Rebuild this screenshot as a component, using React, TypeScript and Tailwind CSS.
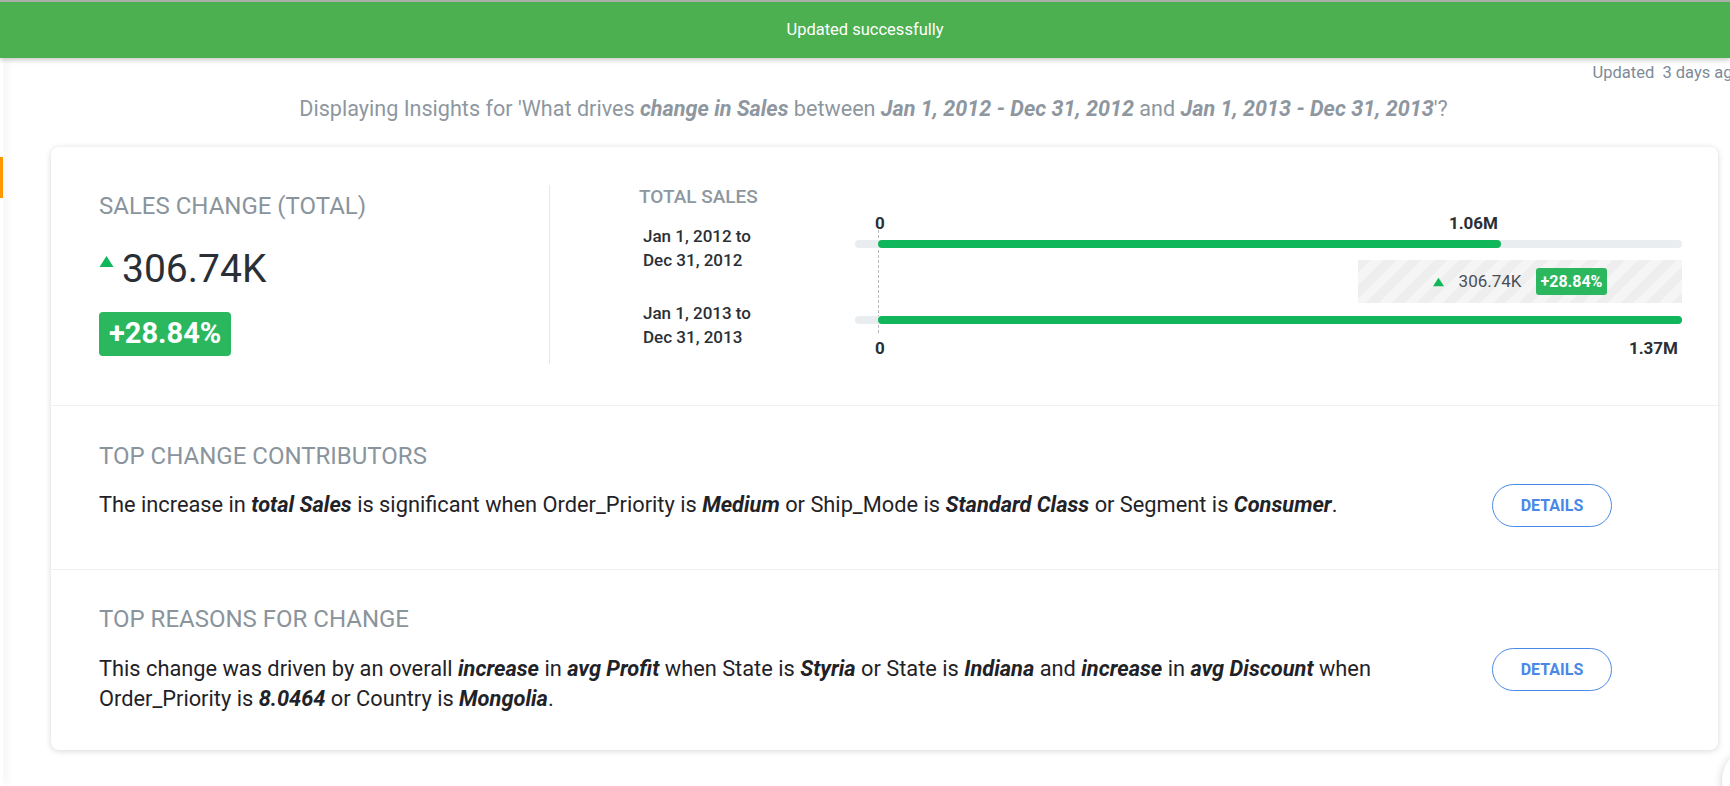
import React from 'react';

function BI({ children }: { children: React.ReactNode }) {
  return <span className="font-bold italic">{children}</span>;
}

function UpTriangle({ className }: { className?: string }) {
  return (
    <svg viewBox="0 0 14 11" className={className}>
      <polygon points="7,0 14,11 0,11" fill="currentColor" />
    </svg>
  );
}

function DetailsButton() {
  return (
    <div className="w-[236px] flex justify-center shrink-0">
      <button className="w-[120px] h-[43px] rounded-full border border-[#4a88e8] text-[#4a88e8] text-[16px] font-bold bg-white">
        DETAILS
      </button>
    </div>
  );
}

function SalesChart() {
  return (
    <div className="flex-1 pl-[89px] pr-[36px]">
      <div className="mt-[2px] text-[19px] leading-5 font-medium text-[#8e979f]">TOTAL SALES</div>
      <div className="mt-[7px] flex">
        {/* period labels */}
        <div className="w-[216px] pl-1 text-[17px] leading-6 font-medium text-[#2a2f36]">
          <div className="mt-[10px]">
            <div>Jan 1, 2012 to</div>
            <div>Dec 31, 2012</div>
          </div>
          <div className="mt-[29px]">
            <div>Jan 1, 2013 to</div>
            <div>Dec 31, 2013</div>
          </div>
        </div>

        {/* bars */}
        <div className="flex-1 relative">
          <div className="absolute left-[23px] top-[16px] h-[103px] border-l border-dashed border-[#b4b8bc]" />
          <div className="ml-[23px] w-[623px] h-[18px] flex justify-between text-[17px] leading-[18px] font-bold text-[#2a2f36]">
            <span className="-ml-[3px]">0</span>
            <span className="mr-[3px]">1.06M</span>
          </div>
          <div className="relative mt-2 h-2 rounded-full bg-[#e9edf0]">
            <div className="ml-[23px] w-[623px] h-2 rounded-full bg-[#10b65a]" />
          </div>
          <div className="mt-3 h-[43px] flex justify-end">
            <div className="w-[324px] h-full flex items-center justify-center bg-[repeating-linear-gradient(135deg,#eeeeee_0px,#eeeeee_9px,#f5f5f5_9px,#f5f5f5_18px)]">
              <UpTriangle className="w-[11px] h-[10px] text-[#10b65a]" />
              <span className="ml-[15px] text-[17px] text-[#4a4f55]">306.74K</span>
              <span className="ml-[14px] h-[27px] px-[5px] flex items-center rounded-[3px] bg-[#2bb75e] text-white text-[16px] font-bold">
                +28.84%
              </span>
            </div>
          </div>
          <div className="relative mt-[13px] h-2 rounded-full bg-[#e9edf0]">
            <div className="ml-[23px] h-2 rounded-full bg-[#10b65a]" />
          </div>
          <div className="mt-[15px] ml-[23px] h-[18px] flex justify-between text-[17px] leading-[18px] font-bold text-[#2a2f36]">
            <span className="-ml-[3px]">0</span>
            <span className="mr-1">1.37M</span>
          </div>
        </div>
      </div>
    </div>
  );
}

export default function App() {
  return (
    <div className="relative w-[1730px] h-[786px] overflow-hidden bg-white font-['Roboto','Liberation_Sans',sans-serif]">
      {/* toast */}
      <div className="relative z-10 h-[58px] bg-[#4caf50] border-t-2 border-[#a9b0a9] shadow-[0_2px_5px_rgba(0,0,0,0.22)] flex items-center justify-center text-white text-[16.5px]">
        Updated successfully
      </div>

      <div className="flex">
        {/* sidebar edge */}
        <div className="relative w-[3px] h-[728px] bg-white shadow-[3px_0_9px_rgba(0,0,0,0.09)]">
          <div className="absolute left-0 top-[99px] w-[3px] h-[41px] bg-[#ff9800]" />
        </div>

        <div className="flex-1 pl-[48px] pr-[12px]">
          <div className="mt-[5px] -mr-[24px] flex justify-end">
            <span className="whitespace-pre text-[16.5px] leading-5 text-[#7d8b97]">Updated  3 days ago</span>
          </div>

          <div className="mt-3 pr-[22px] text-center text-[21.6px] leading-7 text-[#8e979f]">
            Displaying Insights for 'What drives <BI>change in Sales</BI> between <BI>Jan 1, 2012 - Dec 31, 2012</BI> and{' '}
            <BI>Jan 1, 2013 - Dec 31, 2013</BI>'?
          </div>

          {/* insight card */}
          <div className="mt-6 rounded-lg bg-white shadow-[0_1px_6px_rgba(0,0,0,0.16)]">
            <div className="flex pt-[38px] pb-[41px] border-b border-[#eef0f2]">
              <div className="w-[499px] h-[179px] pl-12 border-r border-[#e6e9ec]">
                <div className="mt-[9px] text-[24px] leading-6 text-[#8a949c]">SALES CHANGE (TOTAL)</div>
                <div className="mt-[31px] flex items-start">
                  <UpTriangle className="mt-[7px] w-[15px] h-[11px] text-[#10b65a]" />
                  <span className="ml-2 text-[39px] leading-10 text-[#2a2f36]">306.74K</span>
                </div>
                <div className="mt-[23px] inline-flex items-center h-[44px] px-[10px] rounded-[4px] bg-[#2bb75e] text-white text-[29px] font-bold">
                  +28.84%
                </div>
              </div>
              <SalesChart />
            </div>

            <div className="px-12 pt-[38px] pb-[42px] border-b border-[#eef0f2]">
              <div className="text-[24px] leading-6 text-[#8a949c]">TOP CHANGE CONTRIBUTORS</div>
              <div className="mt-4 flex items-start">
                <p className="flex-1 mt-[6px] text-[21.8px] leading-[30px] text-[#1f2328] pr-4">
                  The increase in <BI>total Sales</BI> is significant when Order_Priority is <BI>Medium</BI> or Ship_Mode is{' '}
                  <BI>Standard Class</BI> or Segment is <BI>Consumer</BI>.
                </p>
                <DetailsButton />
              </div>
            </div>

            <div className="px-12 pt-[37px] pb-[36px]">
              <div className="text-[24px] leading-6 text-[#8a949c]">TOP REASONS FOR CHANGE</div>
              <div className="mt-[17px] flex items-start">
                <p className="flex-1 mt-[6px] text-[21.8px] leading-[30px] text-[#1f2328] pr-4">
                  This change was driven by an overall <BI>increase</BI> in <BI>avg Profit</BI> when State is <BI>Styria</BI> or State
                  is <BI>Indiana</BI> and <BI>increase</BI> in <BI>avg Discount</BI> when Order_Priority is <BI>8.0464</BI> or Country
                  is <BI>Mongolia</BI>.
                </p>
                <DetailsButton />
              </div>
            </div>
          </div>
        </div>
      </div>

      {/* floating button peeking in at the corner */}
      <div className="absolute left-[1722px] top-[748px] w-[64px] h-[64px] rounded-full bg-white shadow-[0_2px_10px_rgba(0,0,0,0.2)]" />
    </div>
  );
}
